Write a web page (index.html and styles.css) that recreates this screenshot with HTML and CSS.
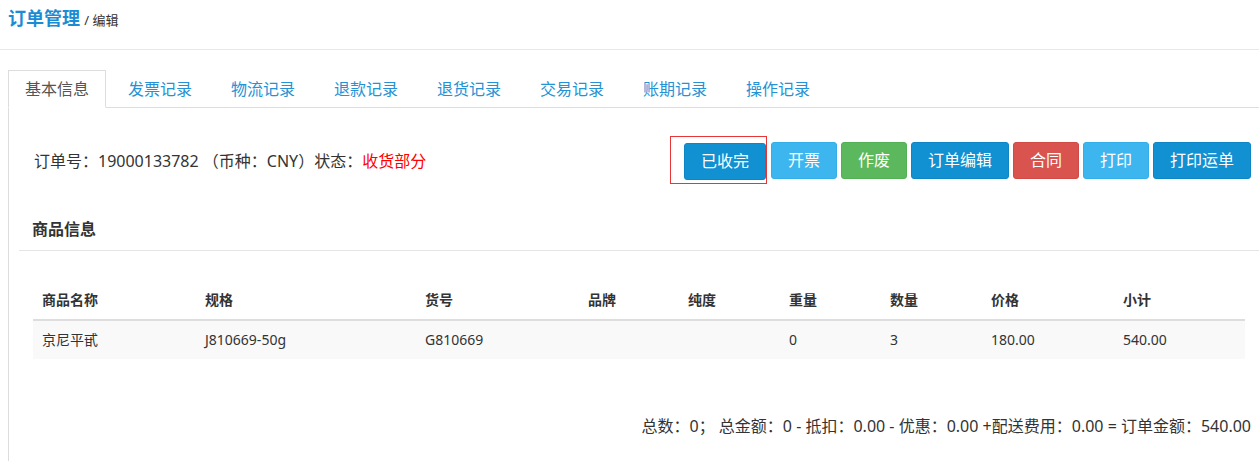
FILE: index.html
```html
<!DOCTYPE html>
<html lang="zh-CN">
<head>
    <meta charset="UTF-8">
    <meta name="viewport" content="width=device-width, initial-scale=1.0">
    <title>订单管理 - 编辑</title>
    <link rel="stylesheet" href="styles.css">
</head>
<body>
    <div class="page-header">
        <span class="page-title">订单管理</span>
        <span class="page-sub">/ 编辑</span>
    </div>

    <div class="main">
        <ul class="tabs">
            <li class="tab active">基本信息</li>
            <li class="tab">发票记录</li>
            <li class="tab">物流记录</li>
            <li class="tab">退款记录</li>
            <li class="tab">退货记录</li>
            <li class="tab">交易记录</li>
            <li class="tab">账期记录</li>
            <li class="tab">操作记录</li>
        </ul>

        <div class="tab-content">
            <div class="order-row">
                <div class="order-info">
                    订单号：19000133782 （币种：CNY）状态：<span class="status">收货部分</span>
                </div>
                <div class="actions">
                    <div class="highlight">
                        <button class="btn btn-primary">已收完</button>
                    </div>
                    <button class="btn btn-info">开票</button>
                    <button class="btn btn-success">作废</button>
                    <button class="btn btn-primary">订单编辑</button>
                    <button class="btn btn-danger">合同</button>
                    <button class="btn btn-info">打印</button>
                    <button class="btn btn-primary">打印运单</button>
                </div>
            </div>

            <div class="section-title">
                <span class="section-text">商品信息</span>
            </div>

            <table class="goods">
                <colgroup>
                    <col style="width:163px">
                    <col style="width:220px">
                    <col style="width:163px">
                    <col style="width:100px">
                    <col style="width:101px">
                    <col style="width:101px">
                    <col style="width:101px">
                    <col style="width:132px">
                    <col style="width:131px">
                </colgroup>
                <thead>
                    <tr>
                        <th>商品名称</th>
                        <th>规格</th>
                        <th>货号</th>
                        <th>品牌</th>
                        <th>纯度</th>
                        <th>重量</th>
                        <th>数量</th>
                        <th>价格</th>
                        <th>小计</th>
                    </tr>
                </thead>
                <tbody>
                    <tr>
                        <td>京尼平甙</td>
                        <td>J810669-50g</td>
                        <td>G810669</td>
                        <td></td>
                        <td></td>
                        <td>0</td>
                        <td>3</td>
                        <td>180.00</td>
                        <td>540.00</td>
                    </tr>
                </tbody>
            </table>

            <div class="summary">
                总数：0； 总金额：0 - 抵扣：0.00 - 优惠：0.00 +配送费用：0.00 = 订单金额：540.00
            </div>
        </div>
    </div>
</body>
</html>
```

FILE: styles.css
```css
body {
    margin: 0;
    font-family: "Noto Sans", "Noto Sans CJK SC", sans-serif;
    color: #333;
    background: #fff;
}

.page-header {
    height: 45px;
    padding: 4px 8px 0;
    border-bottom: 1px solid #e8e8e8;
    line-height: 28px;
}
.page-title {
    font-size: 18px;
    font-weight: bold;
    color: #1a8cd3;
}
.page-sub {
    font-size: 13px;
    color: #333;
}

.main {
    padding: 20px 0 0 8px;
}

.tabs {
    display: flex;
    margin: 0;
    padding: 0;
    list-style: none;
    border-bottom: 1px solid #ddd;
}
.tab {
    padding: 0 16px;
    margin-right: 5px;
    margin-bottom: -1px;
    line-height: 36px;
    font-size: 16px;
    color: #2492d4;
    border: 1px solid transparent;
}
.tab.active {
    color: #555;
    border-color: #ddd;
    border-bottom-color: #fff;
    background: #fff;
}

.tab-content {
    border-left: 1px solid #ddd;
    padding: 28px 0 40px 0;
}

.order-row {
    display: flex;
    justify-content: space-between;
    align-items: center;
    padding: 0 8px 0 25px;
}
.order-info {
    font-size: 16px;
}
.status {
    color: #f00;
}
.actions {
    display: flex;
    align-items: center;
    gap: 4px;
}
.highlight {
    border: 1px solid #e83535;
    padding: 6px 0 3px 13px;
}
.btn {
    font-family: inherit;
    font-size: 16px;
    line-height: 35px;
    padding: 0 16px;
    color: #fff;
    border: 1px solid transparent;
    border-radius: 3px;
    cursor: pointer;
    display: block;
}
.btn-primary {
    background: #1190d2;
    border-color: #0e86c5;
}
.btn-info {
    background: #3db5ef;
    border-color: #33aee8;
}
.btn-success {
    background: #5cb85c;
    border-color: #54b054;
}
.btn-danger {
    background: #d9534f;
    border-color: #d24a46;
}

.section-title {
    margin: 25px 0 0 10px;
    line-height: 41px;
    border-bottom: 1px solid #e5e5e5;
}
.section-text {
    display: inline-block;
    margin-left: 13px;
    font-size: 16px;
    font-weight: bold;
}

.goods {
    table-layout: fixed;
    border-collapse: collapse;
    width: 1212px;
    margin: 30px 0 0 24px;
    font-size: 14px;
}
.goods th {
    text-align: left;
    font-weight: bold;
    padding: 8px 9px;
    line-height: 22px;
    border-bottom: 2px solid #ddd;
}
.goods td {
    padding: 8px 9px;
    line-height: 22px;
    background: #f9f9f9;
}

.summary {
    margin-top: 56px;
    padding-right: 8px;
    text-align: right;
    font-size: 16px;
    line-height: 22px;
}
```
